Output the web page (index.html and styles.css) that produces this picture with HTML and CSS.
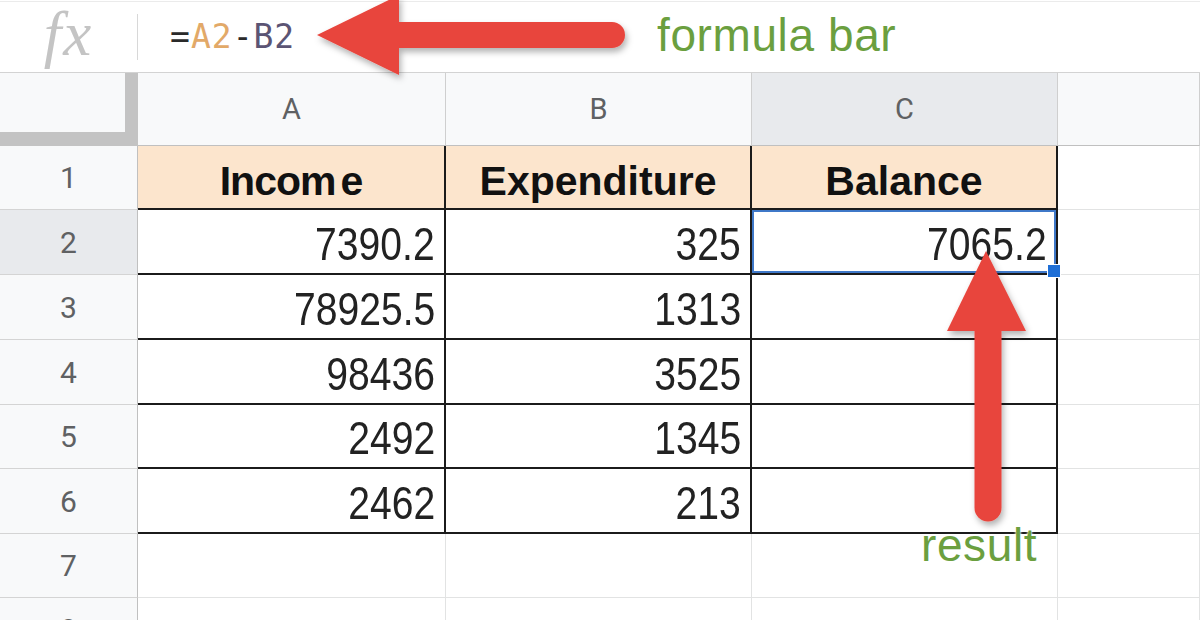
FILE: index.html
```html
<!DOCTYPE html>
<html lang="en">
<head>
<meta charset="utf-8">
<title>Sheet formula</title>
<link rel="stylesheet" href="styles.css">
</head>
<body>
<div class="sheet">
  <div class="formula-bar">
    <div class="fx">fx</div>
    <div class="fx-sep"></div>
    <div class="formula"><span class="op">=</span><span class="ref-a">A2</span><span class="op">-</span><span class="ref-b">B2</span></div>
    <div class="note">formula bar</div>
  </div>

  <div class="grid">
    <div class="corner"></div>
    <div class="colhdr">A</div>
    <div class="colhdr">B</div>
    <div class="colhdr active">C</div>
    <div class="colhdr"></div>

    <div class="rowhdr">1</div>
    <div class="cell t head"><span class="h tight">Incom<span class="gap">e</span></span></div>
    <div class="cell t head"><span class="h">Expenditure</span></div>
    <div class="cell t head"><span class="h">Balance</span></div>
    <div class="cell"></div>

    <div class="rowhdr active">2</div>
    <div class="cell t"><span class="v">7390.2</span></div>
    <div class="cell t"><span class="v">325</span></div>
    <div class="cell t sel"><span class="v">7065.2</span></div>
    <div class="cell"></div>

    <div class="rowhdr">3</div>
    <div class="cell t"><span class="v">78925.5</span></div>
    <div class="cell t"><span class="v">1313</span></div>
    <div class="cell t"></div>
    <div class="cell"></div>

    <div class="rowhdr">4</div>
    <div class="cell t"><span class="v">98436</span></div>
    <div class="cell t"><span class="v">3525</span></div>
    <div class="cell t"></div>
    <div class="cell"></div>

    <div class="rowhdr">5</div>
    <div class="cell t"><span class="v">2492</span></div>
    <div class="cell t"><span class="v">1345</span></div>
    <div class="cell t"></div>
    <div class="cell"></div>

    <div class="rowhdr">6</div>
    <div class="cell t"><span class="v">2462</span></div>
    <div class="cell t"><span class="v">213</span></div>
    <div class="cell t"></div>
    <div class="cell"></div>

    <div class="rowhdr">7</div>
    <div class="cell"></div>
    <div class="cell"></div>
    <div class="cell"></div>
    <div class="cell"></div>

    <div class="rowhdr">8</div>
    <div class="cell"></div>
    <div class="cell"></div>
    <div class="cell"></div>
    <div class="cell"></div>
  </div>

  <div class="note result">result</div>

  <svg class="arrows" width="1200" height="620" viewBox="0 0 1200 620" aria-hidden="true">
    <defs>
      <filter id="sh" x="-30%" y="-30%" width="160%" height="160%">
        <feDropShadow dx="2" dy="4" stdDeviation="3" flood-color="#000" flood-opacity="0.3"/>
      </filter>
    </defs>
    <g fill="#e8453c" stroke="#e8453c" filter="url(#sh)">
      <line x1="396" y1="35" x2="612" y2="35" stroke-width="26" stroke-linecap="round"/>
      <polygon points="317,35 399,-5 399,75" stroke="none"/>
      <line x1="988" y1="326" x2="988" y2="508" stroke-width="27" stroke-linecap="round"/>
      <polygon points="986,251 947,331 1026,331" stroke="none"/>
    </g>
  </svg>
</div>
</body>
</html>
```

FILE: styles.css
```css
html, body {
  margin: 0;
  padding: 0;
  background: #ffffff;
}

body {
  width: 1200px;
  height: 620px;
  overflow: hidden;
  font-family: "Liberation Sans", Arial, sans-serif;
}

.sheet {
  position: relative;
  width: 1200px;
  height: 620px;
  overflow: hidden;
}

/* ---------- formula bar ---------- */
.formula-bar {
  display: flex;
  align-items: center;
  height: 72px;
  margin-top: 1px;
  box-sizing: border-box;
  border-top: 1px solid #ebebeb;
  border-bottom: 1px solid #d3d3d3;
}

.fx {
  width: 137px;
  text-align: center;
  font-family: "Liberation Serif", "Times New Roman", serif;
  font-style: italic;
  font-size: 63px;
  line-height: 1;
  color: #c4c4c4;
  padding-bottom: 6px;
  letter-spacing: 2px;
}

.fx-sep {
  width: 1px;
  height: 46px;
  background: #d8d8d8;
}

.formula {
  width: 519px;
  box-sizing: border-box;
  padding-left: 32px;
  font-family: "DejaVu Sans Mono", "Liberation Mono", monospace;
  font-size: 33px;
  letter-spacing: 1px;
  color: #2a2a2a;
  padding-bottom: 2px;
}

.ref-a { color: #e2a968; }
.ref-b { color: #5b5474; }

.note {
  font-family: "Liberation Sans", Arial, sans-serif;
  font-size: 46px;
  line-height: 1;
  color: #6b9f3f;
  letter-spacing: 0.6px;
  text-shadow: 0 0 2px #ffffff, 0 0 3px #ffffff;
  padding-bottom: 4px;
}

.result {
  position: absolute;
  left: 921px;
  top: 522px;
  z-index: 6;
}

/* ---------- grid ---------- */
.grid {
  display: grid;
  grid-template-columns: 138px 308px 306px 306px 1fr;
  grid-template-rows: 73px 64px 65px 65px 65px 64px 65px 64px 64px;
}

.corner {
  background: #f8f9fa;
  box-sizing: border-box;
  border-right: 13px solid #c3c3c3;
  border-bottom: 14px solid #c3c3c3;
}

.colhdr,
.rowhdr {
  display: flex;
  align-items: center;
  justify-content: center;
  box-sizing: border-box;
  background: #f8f9fa;
  font-family: Roboto, "Liberation Sans", Arial, sans-serif;
  color: #5f6163;
}

.colhdr {
  font-size: 29px;
  border-right: 1px solid #cfcfcf;
  border-bottom: 1px solid #c0c0c0;
}

.rowhdr {
  font-size: 30px;
  border-right: 1px solid #c0c0c0;
  border-bottom: 1px solid #d4d4d4;
}

.colhdr.active,
.rowhdr.active {
  background: #e8eaed;
}

.cell {
  display: flex;
  align-items: flex-end;
  justify-content: flex-end;
  box-sizing: border-box;
  padding: 0 9px 6px 0;
  border-right: 1px solid #e2e3e3;
  border-bottom: 1px solid #e2e3e3;
  font-size: 46px;
  line-height: 1;
  color: #222222;
}

.cell.t {
  border-right: 2px solid #1b1b1b;
  border-bottom: 2px solid #1b1b1b;
}

.cell.head {
  justify-content: center;
  padding: 0 0 6px 0;
  background: #fce5cd;
  font-weight: bold;
  font-size: 41px;
  color: #111111;
}

.tight {
  letter-spacing: -1px;
}

.gap {
  margin-left: 5px;
}

.v {
  display: inline-block;
  transform: scaleX(0.85);
  transform-origin: right bottom;
}

.cell.sel {
  position: relative;
  z-index: 2;
}

.cell.sel::after {
  content: "";
  position: absolute;
  inset: 0;
  border: 2px solid #3f78c8;
}

.cell.sel::before {
  content: "";
  position: absolute;
  right: -5px;
  bottom: -5px;
  width: 12px;
  height: 12px;
  background: #1f6fd6;
  border: 1px solid #ffffff;
  z-index: 3;
}

/* ---------- annotation arrows ---------- */
.arrows {
  position: absolute;
  left: 0;
  top: 0;
  z-index: 5;
  pointer-events: none;
}
```
